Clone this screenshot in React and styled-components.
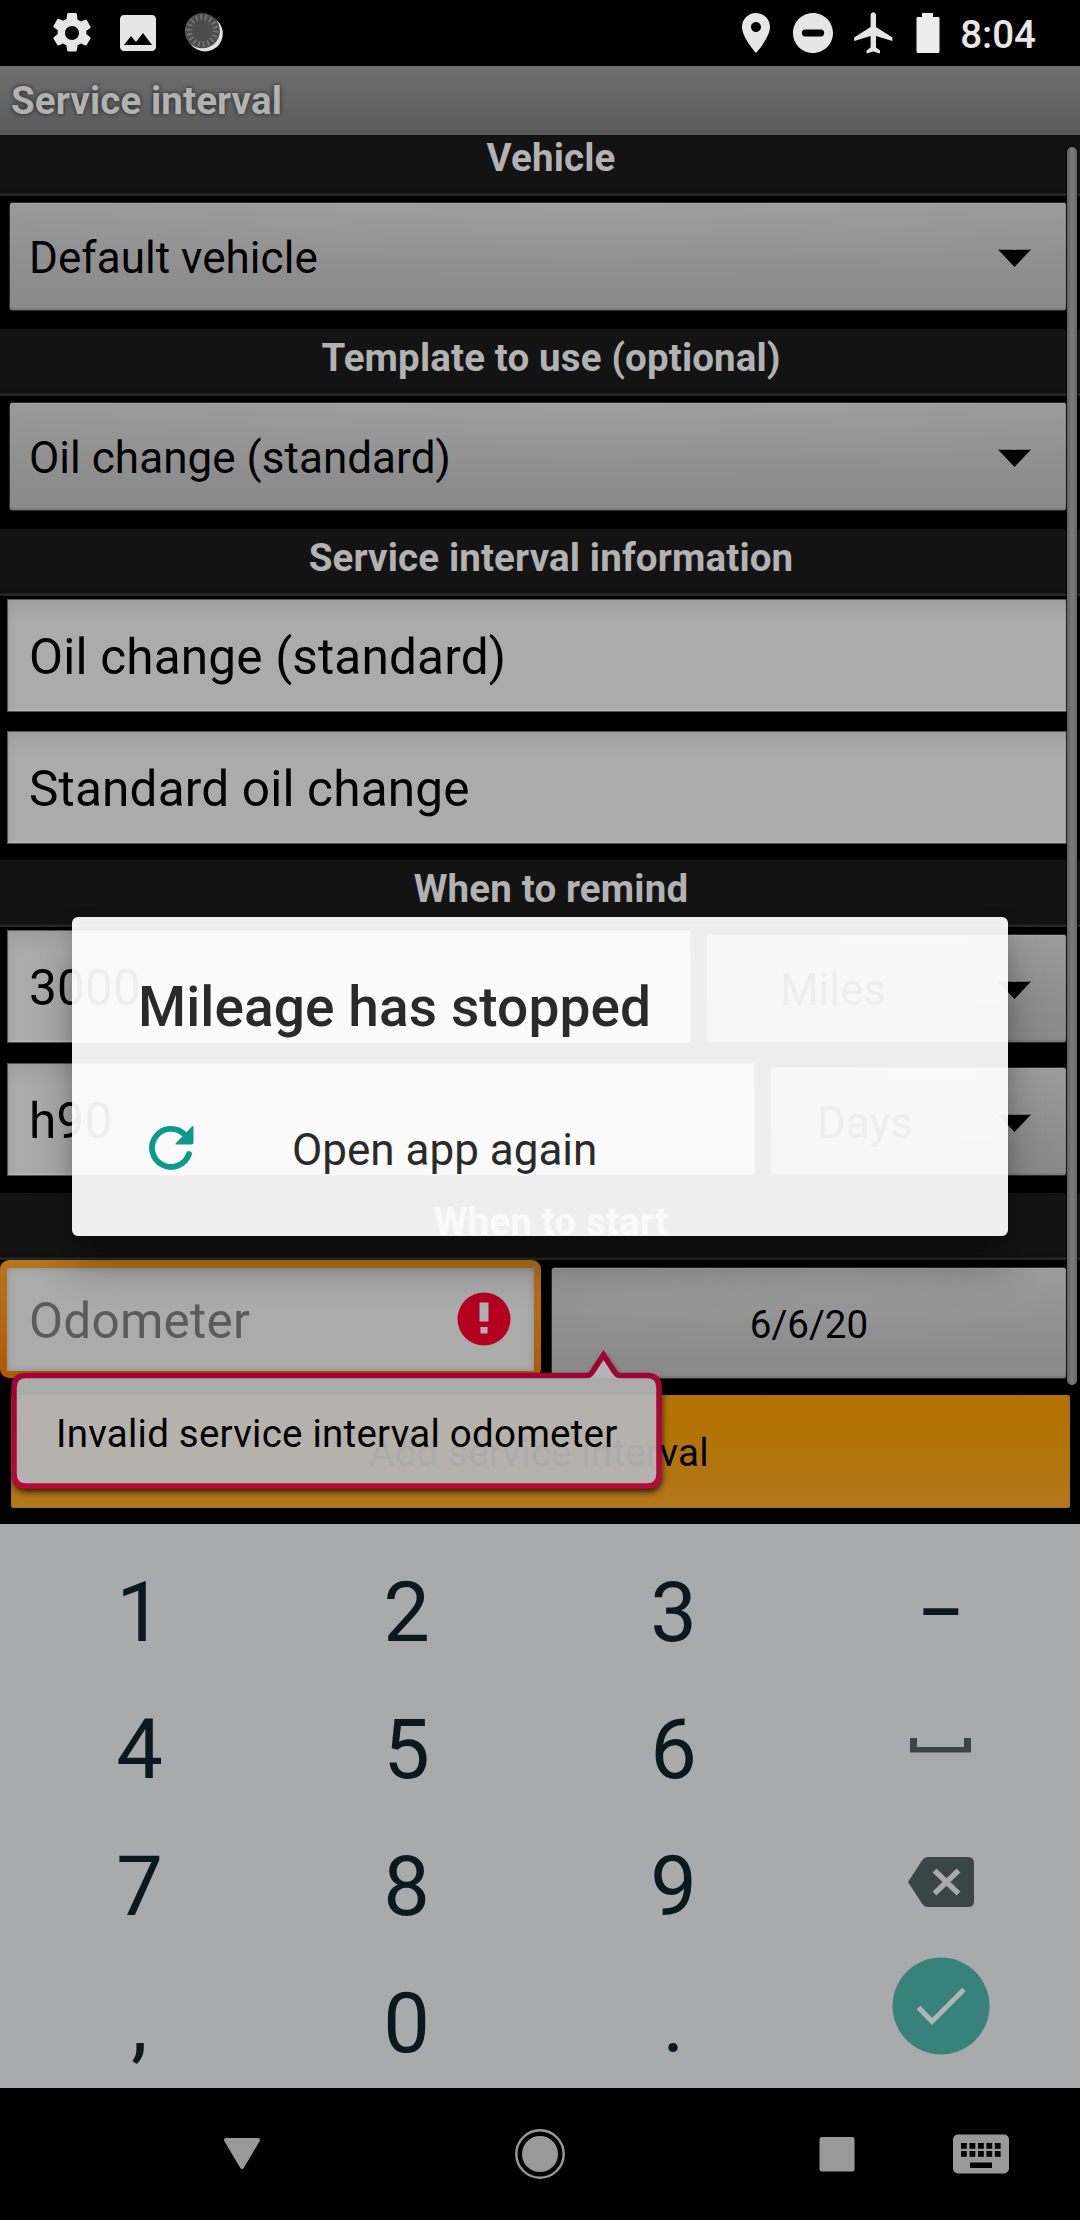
import React from "react";
import styled, { createGlobalStyle, css } from "styled-components";

const GlobalStyle = createGlobalStyle`
  html, body { margin: 0; padding: 0; background: #000; }
  *, *::before, *::after { box-sizing: border-box; }
`;

const Screen = styled.div`
  position: relative;
  display: flex;
  flex-direction: column;
  width: 1080px;
  height: 2220px;
  overflow: hidden;
  background: #000;
  color: #000;
  font-family: Roboto, "Liberation Sans", sans-serif;
  font-size: 38.5px;
  white-space: nowrap;
`;

/* ---------- status bar ---------- */

const StatusBar = styled.header`
  display: flex;
  align-items: center;
  justify-content: space-between;
  flex: none;
  height: 66px;
  padding: 0 44px 0 48px;
`;

const StatusGroup = styled.div`
  display: flex;
  align-items: center;
  gap: ${(p) => p.$gap}px;
`;

const StatusGlyph = styled.svg`
  width: 48px;
  height: 48px;
  margin-left: ${(p) => p.$before || 0}px;
  fill: #e6e6e6;
  fill-rule: evenodd;
`;

const Clock = styled.time`
  margin-left: 11px;
  padding-top: 3px;
  color: #e6e6e6;
  font-weight: 500;
  line-height: 63px;
`;

/* ---------- form ---------- */

const TitleBar = styled.h1`
  flex: none;
  height: 69px;
  margin: 0;
  padding-left: 11px;
  background: linear-gradient(#6f6f6f, #5a5a5a);
  color: #b2b2b2;
  font-size: 38.5px;
  font-weight: 700;
  letter-spacing: 0.12px;
  line-height: 69px;
  text-shadow: 0 0 5px rgba(0, 0, 0, 0.7);
`;

const Form = styled.main`
  position: relative;
  display: flex;
  flex-direction: column;
  flex: none;
  height: 1389px;
`;

const SectionHeader = styled.h2`
  display: flex;
  align-items: center;
  justify-content: center;
  flex: none;
  height: 67px;
  margin: 0;
  padding: 0 0 11px 22px;
  background: linear-gradient(#131313 61px, #0f0f0f 64px, #2b2b2b 65px, #232323);
  color: #b2b2b2;
  font-size: 38.5px;
  font-weight: 700;
  letter-spacing: 0.15px;
`;

const FormClip = styled.div`
  display: flex;
  flex-direction: column;
  flex: none;
  height: 61px;
  justify-content: flex-end;
  overflow: hidden;
`;

const grayFace = css`
  background:
    radial-gradient(ellipse 70% 75% at 55% 0, rgba(255, 255, 255, 0.07), rgba(255, 255, 255, 0) 100%),
    linear-gradient(#989898, #909090 50%, #898989);
  box-shadow: inset 0 1px 0 #a6a6a6, inset 0 -2px 0 #7c7c7c;
  border: 1px solid #2c2c2c;
  border-radius: 3px;
`;

const SpinnerBox = styled.div`
  ${grayFace}
  display: flex;
  align-items: center;
  flex: none;
  width: ${(p) => (p.$width ? p.$width + "px" : "auto")};
  height: 109px;
  margin: ${(p) => p.$margin || "0"};
  padding: 3px 35px 0 19px;
  font-size: 44px;
  letter-spacing: 0.05px;
`;

const SpinnerLabel = styled.span`
  flex: 1;
  padding-right: ${(p) => (p.$centered ? 58 : 0)}px;
  text-align: ${(p) => (p.$centered ? "center" : "left")};
`;

const TextBox = styled.div`
  display: flex;
  align-items: center;
  flex: none;
  width: ${(p) => (p.$width ? p.$width + "px" : "auto")};
  height: 113px;
  margin: ${(p) => p.$margin || "0"};
  padding: 2px 19px 0 21px;
  border: 1px solid #555;
  background: linear-gradient(#9e9e9e, #a6a6a6 12px, #ababab 24px, #ababab);
  box-shadow: inset 4px 0 5px -3px #999, inset 0 -2px 0 #b6b6b6;
  font-size: 49.5px;
  letter-spacing: 0.18px;
`;

const FocusRing = styled.div`
  flex: none;
  width: 541px;
  height: 118px;
  padding: 8px 7px 7px;
  border-radius: 9px;
  background: linear-gradient(#b87420, #b26612 60%, #ad5800);
`;

const FocusedBox = styled.div`
  display: flex;
  align-items: center;
  justify-content: space-between;
  height: 103px;
  padding: 0 23px 1px 22px;
  background: #ababab;
  box-shadow: inset 0 0 7px #8d8d8d;
  color: #5b5b5b;
  font-size: 49.5px;
  letter-spacing: 0.25px;
`;

const Placeholder = styled.span`
  padding-top: 3px;
`;

const Row = styled.div`
  display: flex;
  align-items: flex-start;
  flex: none;
  height: ${(p) => p.$height}px;
`;

const DateButton = styled.div`
  ${grayFace}
  display: flex;
  align-items: center;
  justify-content: center;
  width: 516px;
  height: 112px;
  margin: 7px 0 0 10px;
  padding-top: 3px;
`;

const SubmitButton = styled.div`
  display: flex;
  align-items: center;
  justify-content: center;
  flex: none;
  height: 113px;
  margin: 0 10px 0 11px;
  padding: 2px 3px 0 0;
  border: 1px solid #a8751f;
  border-radius: 2px;
  background: linear-gradient(#b47200, #b37408 50%, #b3761b);
  letter-spacing: 0.2px;
`;

const ScrollThumb = styled.div`
  position: absolute;
  top: 12px;
  right: 3px;
  width: 10px;
  height: 1238px;
  border-radius: 5px;
  background: linear-gradient(90deg, #606060, #7c7c7c 50%, #666);
  box-shadow: 0 0 1px 1px rgba(0, 0, 0, 0.6);
`;

/* ---------- validation popup ---------- */

const Popup = styled.div`
  position: absolute;
  left: 0;
  top: 1340px;
  width: 680px;
  height: 164px;
`;

const PopupText = styled.div`
  position: absolute;
  left: 56px;
  top: 71px;
  letter-spacing: 0.23px;
  line-height: 46px;
`;

/* ---------- keyboard ---------- */

const Keyboard = styled.section`
  display: grid;
  grid-template-columns: repeat(4, 267px);
  grid-auto-rows: 137px;
  flex: none;
  height: 564px;
  padding: 20px 6px 0;
  background: #a9aaac;
  color: #09191f;
`;

const Key = styled.div`
  display: flex;
  align-items: center;
  justify-content: center;
  font-size: 83px;
`;

const DashKey = styled(Key)`
  font-size: 70px;
  font-weight: 500;
`;

const IconKey = styled(Key)`
  align-items: flex-start;
  padding-top: ${(p) => p.$top}px;
`;

/* ---------- navigation bar ---------- */

const NavBar = styled.nav`
  display: flex;
  align-items: center;
  flex: none;
  height: 132px;
  padding-left: 212px;
`;

const NavItem = styled.div`
  display: flex;
  justify-content: center;
  width: 60px;
  margin-right: ${(p) => p.$after || 0}px;
`;

/* ---------- dialog ---------- */

const Dialog = styled.section`
  position: absolute;
  left: 72px;
  top: 917px;
  display: flex;
  flex-direction: column;
  width: 936px;
  height: 319px;
  padding: 55px 66px 0;
  border-radius: 6px;
  background: rgba(255, 255, 255, 0.935);
  box-shadow: 0 30px 42px rgba(0, 0, 0, 0.3), 0 0 14px rgba(0, 0, 0, 0.1);
  color: #2a2a2a;
`;

const DialogTitle = styled.h2`
  margin: 0;
  font-size: 55px;
  font-weight: 500;
  letter-spacing: 0.1px;
  line-height: 70px;
`;

const DialogAction = styled.div`
  display: flex;
  align-items: center;
  height: 126px;
  margin-top: 42px;
  padding-left: 10px;
  gap: 98px;
  font-size: 44px;
`;

const ActionLabel = styled.span`
  padding-top: 6px;
`;

/* ---------- icons ---------- */

const StatusIcon = ({ d, before }) => (
  <StatusGlyph $before={before} viewBox="0 0 24 24">
    <path d={d} />
  </StatusGlyph>
);

const GEAR =
  "M19.14 12.94c.04-.3.06-.61.06-.94 0-.32-.02-.64-.07-.94l2.03-1.58c.18-.14.23-.41.12-.61l-1.92-3.32c-.12-.22-.37-.29-.59-.22l-2.39.96c-.5-.38-1.03-.7-1.62-.94L14.4 2.4c-.04-.24-.24-.4-.48-.4h-3.84c-.24 0-.43.16-.47.41l-.36 2.54c-.59.24-1.13.57-1.62.94l-2.39-.96c-.22-.08-.47 0-.59.22L2.74 8.47c-.12.21-.08.47.12.61l2.03 1.58c-.05.3-.09.63-.09.94s.02.64.07.94l-2.03 1.58c-.18.14-.23.41-.12.61l1.92 3.32c.12.22.37.29.59.22l2.39-.96c.5.38 1.03.7 1.62.94l.36 2.54c.05.24.24.41.48.41h3.84c.24 0 .44-.17.47-.41l.36-2.54c.59-.24 1.13-.56 1.62-.94l2.39.96c.22.08.47 0 .59-.22l1.92-3.32c.12-.22.07-.47-.12-.61l-2.01-1.58zM12 15.5c-1.93 0-3.5-1.57-3.5-3.5s1.57-3.5 3.5-3.5 3.5 1.57 3.5 3.5-1.57 3.5-3.5 3.5z";
const IMAGE =
  "M21 19V5c0-1.1-.9-2-2-2H5c-1.1 0-2 .9-2 2v14c0 1.1.9 2 2 2h14c1.1 0 2-.9 2-2zM8.5 13.5l2.5 3.01L14.5 12l4.5 6H5l3.5-4.5z";
const PIN =
  "M12 2C8.13 2 5 5.13 5 9c0 5.25 7 13 7 13s7-7.75 7-13c0-3.87-3.13-7-7-7zm0 9.5c-1.38 0-2.5-1.12-2.5-2.5s1.12-2.5 2.5-2.5 2.5 1.12 2.5 2.5-1.12 2.5-2.5 2.5z";
const DND =
  "M12 2C6.48 2 2 6.48 2 12s4.48 10 10 10 10-4.48 10-10S17.52 2 12 2zM8 10.3h8c1 0 1.6.7 1.6 1.7s-.6 1.7-1.6 1.7H8c-1 0-1.6-.7-1.6-1.7s.6-1.7 1.6-1.7z";
const PLANE =
  "M21.2 16v-1.7L13 9V3.1c0-.83-.6-1.5-1.35-1.5S10.3 2.27 10.3 3.1V9L2.1 14.3V16l8.2-2.5V19.3l-2 1.5V22.3l3.35-1 3.35 1v-1.5L13 19.3v-5.8l8.2 2.5z";

const CoinIcon = () => (
  <svg width="48" height="48" viewBox="0 0 48 48">
    <circle cx="25" cy="24.600" r="17.800" fill="#e2e2e2" />
    <circle cx="22.300" cy="21.700" r="17.600" fill="#4c4c4c" />
    <circle cx="22.300" cy="21.700" r="13.400" fill="none" stroke="#787878" strokeWidth="5.500" strokeDasharray="1.7 2.978" />
  </svg>
);

const BatteryIcon = () => (
  <svg width="24" height="42" viewBox="0 0 24 42">
    <path d="M6 1h11v4h5c1 0 1.500.5 1.500 1.500V39c0 1-.5 2-1.500 2H2c-1 0-1.500-1-1.500-2V6.500C.5 5.500 1 5 2 5h4z" fill="#ececec" />
  </svg>
);

const Caret = () => (
  <svg width="33" height="18" viewBox="0 0 33 18">
    <path d="M0 .5C4 1 29 1 33 .5L16.500 18z" fill="#000" />
  </svg>
);

const ErrorIcon = () => (
  <svg width="54" height="54" viewBox="0 0 54 54">
    <circle cx="27" cy="27" r="26.500" fill="#b50020" />
    <path d="M22.500 10.500h9v19h-9zM23.500 35h7v6.500h-7z" fill="#b0b0b0" />
  </svg>
);

const BUBBLE =
  "M26 35.500H587q3 0 5-3L603.500 15 615 32.500q2 3 5 3H647q12 0 12 12V134q0 12-12 12H26q-12 0-12-12V47.500q0-12 12-12z";

const PopupFrame = () => (
  <svg width="680" height="164" viewBox="0 0 680 164">
    <defs>
      <filter id="popupShadow" x="-5%" y="-10%" width="110%" height="130%">
        <feDropShadow dx="1" dy="4" stdDeviation="3" floodColor="#000" floodOpacity="0.75" />
      </filter>
      <linearGradient id="popupEdge" x1="0" y1="0" x2="0" y2="1">
        <stop offset="0" stopColor="#9a0434" />
        <stop offset="1" stopColor="#b60a3c" />
      </linearGradient>
      <mask id="outside">
        <rect width="680" height="164" fill="#fff" />
        <path d={BUBBLE} fill="#000" />
      </mask>
    </defs>
    <g mask="url(#outside)">
      <path d={BUBBLE} fill="#9a0434" stroke="#9a0434" strokeWidth="4" filter="url(#popupShadow)" />
    </g>
    <path d={BUBBLE} fill="rgba(181,181,182,0.945)" stroke="url(#popupEdge)" strokeWidth="5.500" />
  </svg>
);

const SpaceIcon = () => (
  <svg width="61" height="15" viewBox="0 0 61 15">
    <path d="M0 0h7v9h47V0h7v14.500H0z" fill="#3a4548" />
  </svg>
);

const BackspaceIcon = () => (
  <svg width="66" height="50" viewBox="0 0 66 50">
    <path d="M0 25 14 3.500Q16.500 0 20 0H60q6 0 6 6V44q0 6-6 6H20q-3.500 0-6-3.500z" fill="#3a4548" />
    <path d="M26.500 13.500l24 23m0-23l-24 23" stroke="#a9aaac" strokeWidth="5.400" />
  </svg>
);

const DoneIcon = () => (
  <svg width="98" height="98" viewBox="0 0 98 98">
    <circle cx="49" cy="49" r="48.500" fill="#37827a" />
    <path d="M26.500 50.500L40 64.500 72 32.500" fill="none" stroke="#b4b4b4" strokeWidth="5" />
  </svg>
);

const ReloadIcon = () => (
  <svg width="46" height="46" viewBox="0 0 46 46">
    <path d="M36.500 10.500A19 19 0 1 0 41 30" fill="none" stroke="#0d9a8b" strokeWidth="5.800" strokeLinecap="round" />
    <path d="M45.500 2.500V18.500q0 2-2 2H29q-2.500 0-.8-1.800L43.500 3q2-1.500 2-.5z" fill="#0d9a8b" />
  </svg>
);

const BackIcon = () => (
  <svg width="38" height="34" viewBox="0 0 38 34">
    <path d="M3 3H35L19 30z" fill="#999" stroke="#999" strokeWidth="4" strokeLinejoin="round" />
  </svg>
);

const HomeIcon = () => (
  <svg width="52" height="52" viewBox="0 0 52 52">
    <circle cx="26" cy="26" r="23.700" fill="none" stroke="#999" strokeWidth="2.400" />
    <circle cx="26" cy="26" r="18" fill="#999" />
  </svg>
);

const RecentsIcon = () => (
  <svg width="36" height="36" viewBox="0 0 36 36">
    <rect x=".5" y="1" width="35" height="34.500" rx="2.500" fill="#999" />
  </svg>
);

const KeyboardIcon = () => (
  <svg width="56" height="40" viewBox="0 0 56 40">
    <rect y=".5" width="56" height="39" rx="5" fill="#999" />
    <g fill="#000">
      {[8, 16.5, 25, 33.4, 41.8].map((x) => (
        <React.Fragment key={x}>
          <rect x={x} y="9" width="5.800" height="5.800" />
          <rect x={x} y="17" width="5.800" height="5.800" />
        </React.Fragment>
      ))}
      <rect x="17" y="28.500" width="22" height="5.500" />
    </g>
  </svg>
);

function Spinner({ label, centered, ...box }) {
  return (
    <SpinnerBox {...box}>
      <SpinnerLabel $centered={centered}>{label}</SpinnerLabel>
      <Caret />
    </SpinnerBox>
  );
}

export default function App() {
  return (
    <Screen>
      <GlobalStyle />
      <StatusBar>
        <StatusGroup $gap={18}>
          <StatusIcon d={GEAR} />
          <StatusIcon d={IMAGE} />
          <CoinIcon />
        </StatusGroup>
        <StatusGroup $gap={9}>
          <StatusIcon d={PIN} />
          <StatusIcon d={DND} />
          <StatusIcon d={PLANE} before={4} />
          <StatusGroup $gap={9}>
            <span />
            <BatteryIcon />
          </StatusGroup>
          <Clock>8:04</Clock>
        </StatusGroup>
      </StatusBar>

      <TitleBar>Service interval</TitleBar>

      <Form>
        <FormClip>
          <SectionHeader>Vehicle</SectionHeader>
        </FormClip>
        <Spinner label="Default vehicle" $margin="6px 13px 18px 9px" />
        <SectionHeader>Template to use (optional)</SectionHeader>
        <Spinner label="Oil change (standard)" $margin="6px 13px 18px 9px" />
        <SectionHeader>Service interval information</SectionHeader>
        <TextBox $margin="3px 13px 19px 7px">Oil change (standard)</TextBox>
        <TextBox $margin="0 13px 16px 7px">Standard oil change</TextBox>
        <SectionHeader>When to remind</SectionHeader>
        <Row $height={133}>
          <TextBox $width={684} $margin="3px 15px 0 7px">3000</TextBox>
          <Spinner label="Miles" centered $width={361} $margin="7px 0 0" />
        </Row>
        <Row $height={133}>
          <TextBox $width={748} $margin="3px 15px 0 7px">h90</TextBox>
          <Spinner label="Days" centered $width={297} $margin="7px 0 0" />
        </Row>
        <SectionHeader>When to start</SectionHeader>
        <Row $height={135}>
          <FocusRing>
            <FocusedBox>
              <Placeholder>Odometer</Placeholder>
              <ErrorIcon />
            </FocusedBox>
          </FocusRing>
          <DateButton>6/6/20</DateButton>
        </Row>
        <SubmitButton>Add service interval</SubmitButton>
        <ScrollThumb />
      </Form>

      <Keyboard>
        <Key>1</Key>
        <Key>2</Key>
        <Key>3</Key>
        <DashKey>–</DashKey>
        <Key>4</Key>
        <Key>5</Key>
        <Key>6</Key>
        <IconKey $top={57}><SpaceIcon /></IconKey>
        <Key>7</Key>
        <Key>8</Key>
        <Key>9</Key>
        <IconKey $top={39}><BackspaceIcon /></IconKey>
        <Key>,</Key>
        <Key>0</Key>
        <Key>.</Key>
        <IconKey $top={2}><DoneIcon /></IconKey>
      </Keyboard>

      <NavBar>
        <NavItem $after={238}><BackIcon /></NavItem>
        <NavItem $after={237}><HomeIcon /></NavItem>
        <NavItem $after={84}><RecentsIcon /></NavItem>
        <NavItem><KeyboardIcon /></NavItem>
      </NavBar>

      <Popup>
        <PopupFrame />
        <PopupText>Invalid service interval odometer</PopupText>
      </Popup>

      <Dialog>
        <DialogTitle>Mileage has stopped</DialogTitle>
        <DialogAction>
          <ReloadIcon />
          <ActionLabel>Open app again</ActionLabel>
        </DialogAction>
      </Dialog>
    </Screen>
  );
}
